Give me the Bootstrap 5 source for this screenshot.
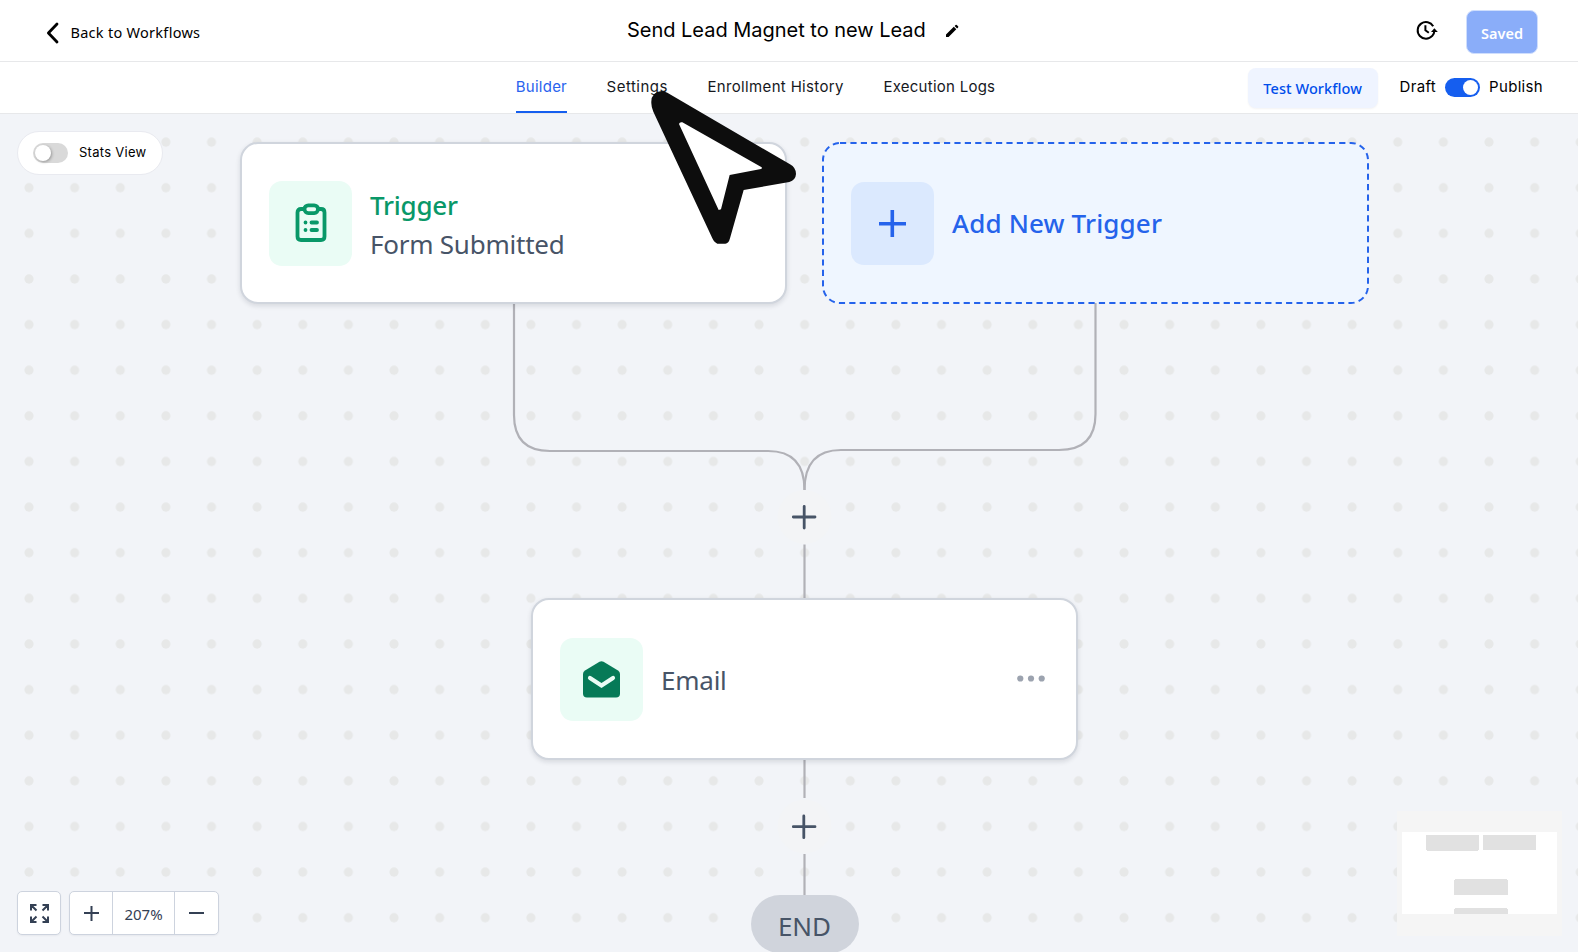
<!DOCTYPE html>
<html lang="en">
<head>
<meta charset="utf-8">
<meta name="viewport" content="width=device-width, initial-scale=1">
<title>Workflow builder</title>
<link href="https://cdn.jsdelivr.net/npm/bootstrap@5.3.0/dist/css/bootstrap.min.css" rel="stylesheet">
<style>
  body{height:952px;overflow:hidden;font-family:Inter,sans-serif;color:#000;background:#fff}
  .ui{font-family:"Noto Sans",sans-serif}
  .topbar{height:62px;border-bottom:1px solid #e7e8ea}
  .tabbar{height:52px;border-bottom:1px solid #e7e8ea}
  .back-link{width:627px;font-size:14.5px;letter-spacing:.28px;color:#000;padding:4px 0 0 46px}
  .back-link span{margin-left:11.5px}
  .wf-title{font-size:20px;letter-spacing:-.02px;line-height:30px;margin-right:19px;padding-bottom:1px}
  .btn-saved{width:72px;height:44px;background:#8aadf9;border:1px solid #cfdefd;border-radius:8px;color:#fff;font-weight:600;font-size:14.5px;padding:5px 0 0;margin:2px 40px 0 28px}
  .tabs{gap:39.6px;margin-left:515.800px}
  .tab-link{font-size:15px;letter-spacing:.34px;line-height:50px;height:51px;color:#16181d;text-decoration:none}
  .tab-link.active{color:#2a63ee;letter-spacing:.24px;box-shadow:inset 0 -2px #155eef}
  .tab-link:nth-child(2){letter-spacing:.48px}
  .tab-link:nth-child(4){letter-spacing:.26px}
  .btn-test{width:130px;height:40px;background:#eff4ff;border:0;border-radius:8px;color:#004eeb;font-size:14.5px;letter-spacing:.08px;font-weight:500;padding:2px 0 0;box-shadow:0 1px 2px rgba(16,24,40,.05)}
  .toggle{width:35px;height:19px;border-radius:10px;background:#155eef;padding:2px}
  .toggle i{display:block;width:15px;height:15px;border-radius:50%;background:#fff}
  .toggle.on i{margin-left:16px}
  .toggle.off{background:#d9d9d9;height:20px}
  .toggle.off i{width:16px;height:16px;box-shadow:1px 1px 3px rgba(0,0,0,.3)}
  .lbl{font-size:15px;letter-spacing:.32px}
  .canvas{background:#f2f4f8}
  .canvas>*,.graph{position:absolute}
  .graph{inset:0;width:100%;height:100%}
  .stats{left:17px;top:17px;width:146px;height:44px;border-radius:22px;background:#fff;border:1px solid #e9eaf0;padding:0 0 0 15px}
  .stats .lbl{font-size:13px;margin-left:11px;letter-spacing:.27px}
  .node{width:547px;height:162px;border-radius:18px;border:2px solid #d0d5dd;background:#fff;box-shadow:0 2px 5px rgba(16,24,40,.12);padding-left:27px;font-size:26px;letter-spacing:-.24px;color:#475467}
  .node-trigger{left:240px;top:28px}
  .node-email{left:531px;top:484px}
  .node-add{left:822px;top:28px;border:0;background:none;box-shadow:none;color:#2563eb;font-weight:500;letter-spacing:.15px;padding-left:29px}
  .tile{width:83px;height:83px;border-radius:13px;background:#eafcf5;margin-right:18px}
  .node-trigger .tile{height:85px}
  .node-add .tile{background:#dbe9fe}
  .node .ui{padding-top:3px}
  .node-add .ui{padding-top:1px}
  .trigger-name{color:#099868;font-weight:500}
  .two-line{line-height:39px}
  .end-node{left:750.5px;top:781px;width:108px;height:58px;border-radius:29px;background:#d0d4dc;color:#475467;font-size:26px;padding-top:4px}
  .ctl{height:44px;top:777px;background:#fff;border:1px solid #cdd3de;border-radius:5px;box-shadow:0 1px 2px rgba(16,24,40,.05);color:#344054}
  .ctl>*+*{border-left:1px solid #cdd3de}
  .ctl-fit{left:17px;width:44px}
  .ctl-zoom{left:69px;width:150px}
  .zoom-in{width:42px}
  .zoom-value{width:62px;font-size:15px;padding-top:3px}
  .minimap{left:1397px;top:697px;width:165px;height:125px;background:#f5f5f5}
  .cursor{left:630px;top:-44px;width:260px;height:250px;z-index:5}
</style>
</head>
<body class="d-flex flex-column">
<header class="topbar d-flex align-items-center flex-shrink-0">
  <a class="back-link ui d-flex align-items-center text-decoration-none" href="#">
    <svg width="13" height="22" viewBox="0 0 13 22" fill="none" stroke="#000" stroke-width="2.8" stroke-linecap="round" stroke-linejoin="round"><path d="M11 2 2.400 11 11 20"/></svg>
    <span>Back to Workflows</span>
  </a>
  <span class="wf-title">Send Lead Magnet to new Lead</span>
  <svg width="14" height="14" viewBox="0 0 14 14"><path d="M1 13v-2.600L8.800 2.700l2.500 2.500L3.600 13zM9.600 1.900l1-1q.6-.5 1.200 0l1.300 1.300q.5.6 0 1.200l-1 1z"/></svg>
  <svg class="ms-auto" width="22" height="22" viewBox="0 0 22 22" fill="none" stroke="#000" stroke-width="2"><path d="M17.200 6.300A8.300 8.300 0 1 0 16.200 15.900Q18.300 14 18.300 11"/><path d="M9.400 5.200V10.200L12.800 12.700"/><path d="M15 12l3.400-3.700L21.800 12z" fill="#000" stroke="none"/></svg>
  <button class="btn btn-saved ui">Saved</button>
</header>
<nav class="tabbar d-flex flex-shrink-0">
  <div class="tabs d-flex">
    <a class="tab-link active" href="#">Builder</a>
    <a class="tab-link" href="#">Settings</a>
    <a class="tab-link" href="#">Enrollment History</a>
    <a class="tab-link" href="#">Execution Logs</a>
  </div>
  <div class="d-flex align-items-center ms-auto" style="padding-right:35px">
    <button class="btn btn-test ui">Test Workflow</button>
    <span class="lbl" style="margin:0 9px 0 22px">Draft</span><span class="toggle on"><i></i></span><span class="lbl" style="margin-left:9px">Publish</span>
  </div>
</nav>
<main class="canvas position-relative flex-grow-1">
  <svg class="graph" viewBox="0 114 1578 838" fill="none">
    <defs><pattern id="dots" x="6.200" y="119.300" width="45.625" height="45.625" patternUnits="userSpaceOnUse"><circle cx="22.800" cy="22.800" r="4.600" fill="#e7e8e8"/></pattern></defs>
    <rect y="114" width="1578" height="838" fill="url(#dots)"/>
    <g fill="#f3f4f6"><circle cx="804.500" cy="517" r="27"/><circle cx="804.500" cy="826.500" r="27"/></g>
    <g stroke="#b1b1b7" stroke-width="2.200">
      <path d="M514 303V415Q514 451 550 451H768Q804.500 451 804.500 490"/>
      <path d="M1095.500 303V414Q1095.500 450 1059 450H841Q804.500 450 804.500 490"/>
      <path d="M804.500 544.500V599M804.500 759V798M804.500 854V896"/>
    </g>
    <path d="M793.300 517h21.700M804.200 506.300v21.700M793.300 826.700h21.700M803.800 816v21.700" stroke="#475467" stroke-width="2.800" stroke-linecap="round"/>
    <rect x="823" y="143" width="545" height="160" rx="17" fill="#eff6ff" stroke="#2563eb" stroke-width="2" stroke-dasharray="6.200 4.200"/>
  </svg>
  <div class="stats d-flex align-items-center"><span class="toggle off"><i></i></span><span class="lbl">Stats View</span></div>

  <div class="node node-trigger d-flex align-items-center">
    <span class="tile d-flex align-items-center justify-content-center">
      <svg width="32" height="40" viewBox="0 0 32 40" fill="none" stroke="#099868" stroke-width="3.800" stroke-linecap="round"><path d="M9 6H6Q2.500 6 2.500 9.500V33.500Q2.500 37 6 37H26Q29.500 37 29.500 33.500V9.500Q29.500 6 26 6H23"/><rect x="9.500" y="2.300" width="13.500" height="7.800" rx="3.800"/><path d="M10.500 19.500h.01M16.500 19.500h5.500M10.500 27h.01M16.500 27h5.500"/></svg>
    </span>
    <span class="ui two-line"><span class="trigger-name">Trigger</span><br>Form Submitted</span>
  </div>

  <div class="node node-add d-flex align-items-center">
    <span class="tile d-flex align-items-center justify-content-center"><svg width="27" height="27" viewBox="0 0 27 27" stroke="#2563eb" stroke-width="3.600"><path d="M0 13.700h27M13.300 0v27"/></svg></span>
    <span class="ui">Add New Trigger</span>
  </div>

  <div class="node node-email d-flex align-items-center">
    <span class="tile d-flex align-items-center justify-content-center">
      <svg width="37" height="37" viewBox="0 0 37 37"><path d="M16.500.7Q18.500-.4 20.500.7L35 9.500Q37 10.800 37 13V32.500Q37 36.500 33 36.500H4Q0 36.500 0 32.500V13Q0 10.800 2 9.500Z" fill="#067a57"/><path d="M7 17 18.500 24.500 30 17" fill="none" stroke="#eafcf5" stroke-width="4.200" stroke-linecap="round" stroke-linejoin="miter"/></svg>
    </span>
    <span class="ui">Email</span>
    <svg class="ms-auto" style="margin:0 31.5px 1px 0" width="28" height="7" viewBox="0 0 28 7" fill="#9ca3af"><circle cx="3.300" cy="3.500" r="3.100"/><circle cx="14" cy="3.500" r="3.100"/><circle cx="24.700" cy="3.500" r="3.100"/></svg>
  </div>

  <div class="end-node ui d-flex align-items-center justify-content-center">END</div>

  <div class="ctl ctl-fit d-flex align-items-center justify-content-center">
    <svg width="19" height="19" viewBox="0 0 19 19" fill="none" stroke="#344054" stroke-width="2"><path d="M1 6.500V1H6.500M1.500 1.500 6.500 6.500M12.500 1H18V6.500M17.500 1.500 12.500 6.500M1 12.500V18H6.500M1.500 17.500 6.500 12.500M12.500 18H18V12.500M17.500 17.500 12.500 12.500"/></svg>
  </div>
  <div class="ctl ctl-zoom d-flex">
    <span class="zoom-in d-flex align-items-center justify-content-center"><svg width="15" height="15" viewBox="0 0 15 15" stroke="#344054" stroke-width="2"><path d="M0 7h15M7.500 0v15"/></svg></span>
    <span class="zoom-value ui d-flex align-items-center justify-content-center">207%</span>
    <span class="d-flex align-items-center justify-content-center flex-grow-1"><svg width="15" height="15" viewBox="0 0 15 15" stroke="#344054" stroke-width="2"><path d="M0 7h15"/></svg></span>
  </div>

  <svg class="minimap" viewBox="1397 811 165 125"><path fill="#fff" d="M1402 832h155v82h-155z"/><path fill="#e1e1e1" d="M1426 835h53v15h-1v1h-51v-1h-1zM1483 835h53v15h-53zM1455 879h52v1h1v15h-54v-15h1zM1455 908h52v1h1v5h-54v-5h1z"/></svg>

  <svg class="cursor" viewBox="0 0 780 750"><path fill="#0d0d0d" d="M64 100Q62 66 95 63 102 63 112 68L480 283Q498 293 498 312 497 330 478 336L341 360 300 505Q296 521 286 521H262Q253 518 247 505L70 125Q64 112 64 100Z"/><path fill="#fff" d="M147 162Q149 155 157 157L395 292Q398 295 393 297L299 315 273 418 266 420Z"/></svg>
</main>
<script src="https://cdn.jsdelivr.net/npm/bootstrap@5.3.0/dist/js/bootstrap.bundle.min.js"></script>
</body>
</html>
